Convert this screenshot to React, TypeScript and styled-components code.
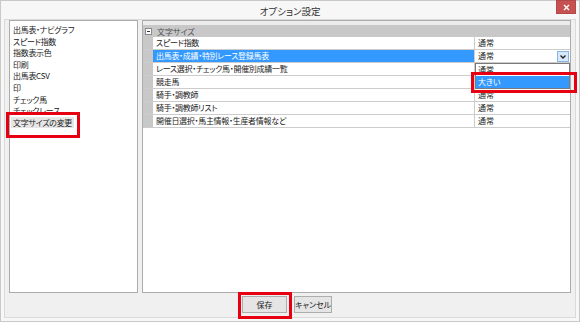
import React from "react";
import styled, { createGlobalStyle } from "styled-components";

const GlobalStyle = createGlobalStyle`
  html, body { margin: 0; padding: 0; background: #ffffff; }
  body {
    font-family: "Noto Sans CJK JP", "Noto Sans", sans-serif;
    font-feature-settings: "palt";
    -webkit-font-smoothing: antialiased;
  }
`;

const Window = styled.div`
  position: relative;
  box-sizing: border-box;
  width: 580px;
  height: 322px;
  border: 1px solid #c9c9c9;
  background: #f7f7f7;
  display: flex;
  flex-direction: column;
  color: #1e1e1e;
`;

const TitleBar = styled.div`
  height: 18px;
  box-sizing: border-box;
  padding-top: 3px;
  text-align: center;
  font-size: 9.5px;
  line-height: 15px;
  color: #333;
`;

const CloseButton = styled.div`
  position: absolute;
  top: -1px;
  right: 3px;
  width: 20px;
  height: 14px;
  background: #c75050;
  border: 1px solid #b34848;
  box-sizing: border-box;
  display: flex;
  align-items: center;
  justify-content: center;
`;

const Client = styled.div`
  margin: 0 3px 3px 3px;
  border: 1px solid #dadada;
  background: #f0f0f0;
  padding: 0 4px 4px 4px;
  display: flex;
  flex-direction: column;
  flex: 1;
`;

const MainRow = styled.div`
  display: flex;
  gap: 4px;
  height: 273px;
`;

const ListBox = styled.div`
  box-sizing: border-box;
  width: 129px;
  border: 1px solid #acacac;
  background: #fff;
  padding: 3px 0 0 1px;
  display: flex;
  flex-direction: column;
  align-items: flex-start;
`;

const ListItem = styled.div<{ $selected?: boolean }>`
  font-size: 8px;
  line-height: 11.6px;
  height: 11.6px;
  padding: 0 2px;
  white-space: nowrap;
  letter-spacing: -0.3px;
  background: ${(p) => (p.$selected ? "#e6e6e6" : "transparent")};
  color: #222;
`;

const Panel = styled.div`
  box-sizing: border-box;
  flex: 1;
  border: 1px solid #acacac;
  background: #fff;
  display: flex;
  flex-direction: column;
`;

const TopStrip = styled.div`
  height: 4px;
  background: #ececec;
`;

const CategoryRow = styled.div`
  height: 12px;
  background: #c8c8c8;
  display: flex;
  align-items: center;
  font-size: 8px;
  color: #505050;
`;

const Collapse = styled.div`
  box-sizing: border-box;
  width: 7px;
  height: 7px;
  margin-left: 2px;
  margin-right: 5px;
  border: 1px solid #8a8a8a;
  background: #fff;
  position: relative;
  &::after {
    content: "";
    position: absolute;
    left: 1px;
    right: 1px;
    top: 2px;
    height: 1px;
    background: #333;
  }
`;

const PropRow = styled.div`
  display: grid;
  grid-template-columns: 10px 321px 96px;
  height: 13px;
  box-sizing: border-box;
  border-bottom: 1px solid #cccccc;
  font-size: 8px;
  line-height: 12px;
`;

const Gutter = styled.div`
  background: #c8c8c8;
`;

const NameCell = styled.div<{ $selected?: boolean }>`
  padding-left: 3px;
  white-space: nowrap;
  overflow: hidden;
  letter-spacing: -0.3px;
  background: ${(p) => (p.$selected ? "#3399ff" : "#fff")};
  color: ${(p) => (p.$selected ? "#fff" : "#222")};
`;

const ValueCell = styled.div`
  border-left: 1px solid #cccccc;
  padding-left: 3px;
  display: flex;
  align-items: flex-start;
  justify-content: space-between;
  white-space: nowrap;
`;

const DropButton = styled.div`
  box-sizing: border-box;
  width: 12px;
  height: 11px;
  margin-right: 1px;
  margin-top: 1px;
  background: #d6e8fa;
  border: 1px solid #86b5e6;
  display: flex;
  align-items: center;
  justify-content: center;
`;

const DropList = styled.div`
  position: absolute;
  left: 474px;
  top: 62px;
  width: 95px;
  height: 26px;
  box-sizing: border-box;
  border: 1px solid #7a7a7a;
  background: #fff;
  font-size: 8px;
  line-height: 12px;
`;

const DropItem = styled.div<{ $active?: boolean }>`
  height: 12px;
  padding-left: 2px;
  background: ${(p) => (p.$active ? "#3399ff" : "#fff")};
  color: ${(p) => (p.$active ? "#fff" : "#222")};
`;

const ButtonRow = styled.div`
  display: flex;
  justify-content: center;
  gap: 7px;
  margin-top: 3px;
  padding-right: 6px;
`;

const Button = styled.div<{ $w: number }>`
  box-sizing: border-box;
  width: ${(p) => p.$w}px;
  height: 17px;
  border: 1px solid #adadad;
  background: #e5e5e5;
  font-size: 8px;
  line-height: 15px;
  text-align: center;
  white-space: nowrap;
  color: #222;
`;

const Highlight = styled.div<{ $x: number; $y: number; $w: number; $h: number }>`
  position: absolute;
  left: ${(p) => p.$x}px;
  top: ${(p) => p.$y}px;
  width: ${(p) => p.$w}px;
  height: ${(p) => p.$h}px;
  box-sizing: border-box;
  border: 3px solid #e60012;
  pointer-events: none;
`;

const menuItems = [
  "出馬表・ナビグラフ",
  "スピード指数",
  "指数表示色",
  "印刷",
  "出馬表CSV",
  "印",
  "チェック馬",
  "チェックレース",
  "文字サイズの変更",
];

const props = [
  "スピード指数",
  "出馬表・成績・特別レース登録馬表",
  "レース選択・チェック馬・開催別成績一覧",
  "競走馬",
  "騎手・調教師",
  "騎手・調教師リスト",
  "開催日選択・馬主情報・生産者情報など",
];

export default function App() {
  return (
    <>
      <GlobalStyle />
      <Window>
        <TitleBar>オプション設定</TitleBar>
        <CloseButton>
          <svg width="7" height="7" viewBox="0 0 7 7">
            <path d="M1 1 L6 6 M6 1 L1 6" stroke="#fff" strokeWidth="1.4" />
          </svg>
        </CloseButton>
        <Client>
          <MainRow>
            <ListBox>
              {menuItems.map((m, i) => (
                <ListItem key={m} $selected={i === menuItems.length - 1}>
                  {m}
                </ListItem>
              ))}
            </ListBox>
            <Panel>
              <TopStrip />
              <CategoryRow>
                <Collapse />
                文字サイズ
              </CategoryRow>
              {props.map((p, i) => (
                <PropRow key={p}>
                  <Gutter />
                  <NameCell $selected={i === 1}>{p}</NameCell>
                  <ValueCell>
                    通常
                    {i === 1 && (
                      <DropButton>
                        <svg width="6" height="4" viewBox="0 0 6 4">
                          <path d="M0.5 0.5 L3 3 L5.5 0.5" stroke="#1e1e1e" strokeWidth="1.3" fill="none" />
                        </svg>
                      </DropButton>
                    )}
                  </ValueCell>
                </PropRow>
              ))}
            </Panel>
          </MainRow>
          <ButtonRow>
            <Button $w={45}>保存</Button>
            <Button $w={38}>キャンセル</Button>
          </ButtonRow>
        </Client>
        <DropList>
          <DropItem>通常</DropItem>
          <DropItem $active>大きい</DropItem>
        </DropList>
        <Highlight $x={5} $y={111} $w={74} $h={26} />
        <Highlight $x={470} $y={71} $w={106} $h={21} />
        <Highlight $x={237} $y={291} $w={54} $h={27} />
      </Window>
    </>
  );
}
